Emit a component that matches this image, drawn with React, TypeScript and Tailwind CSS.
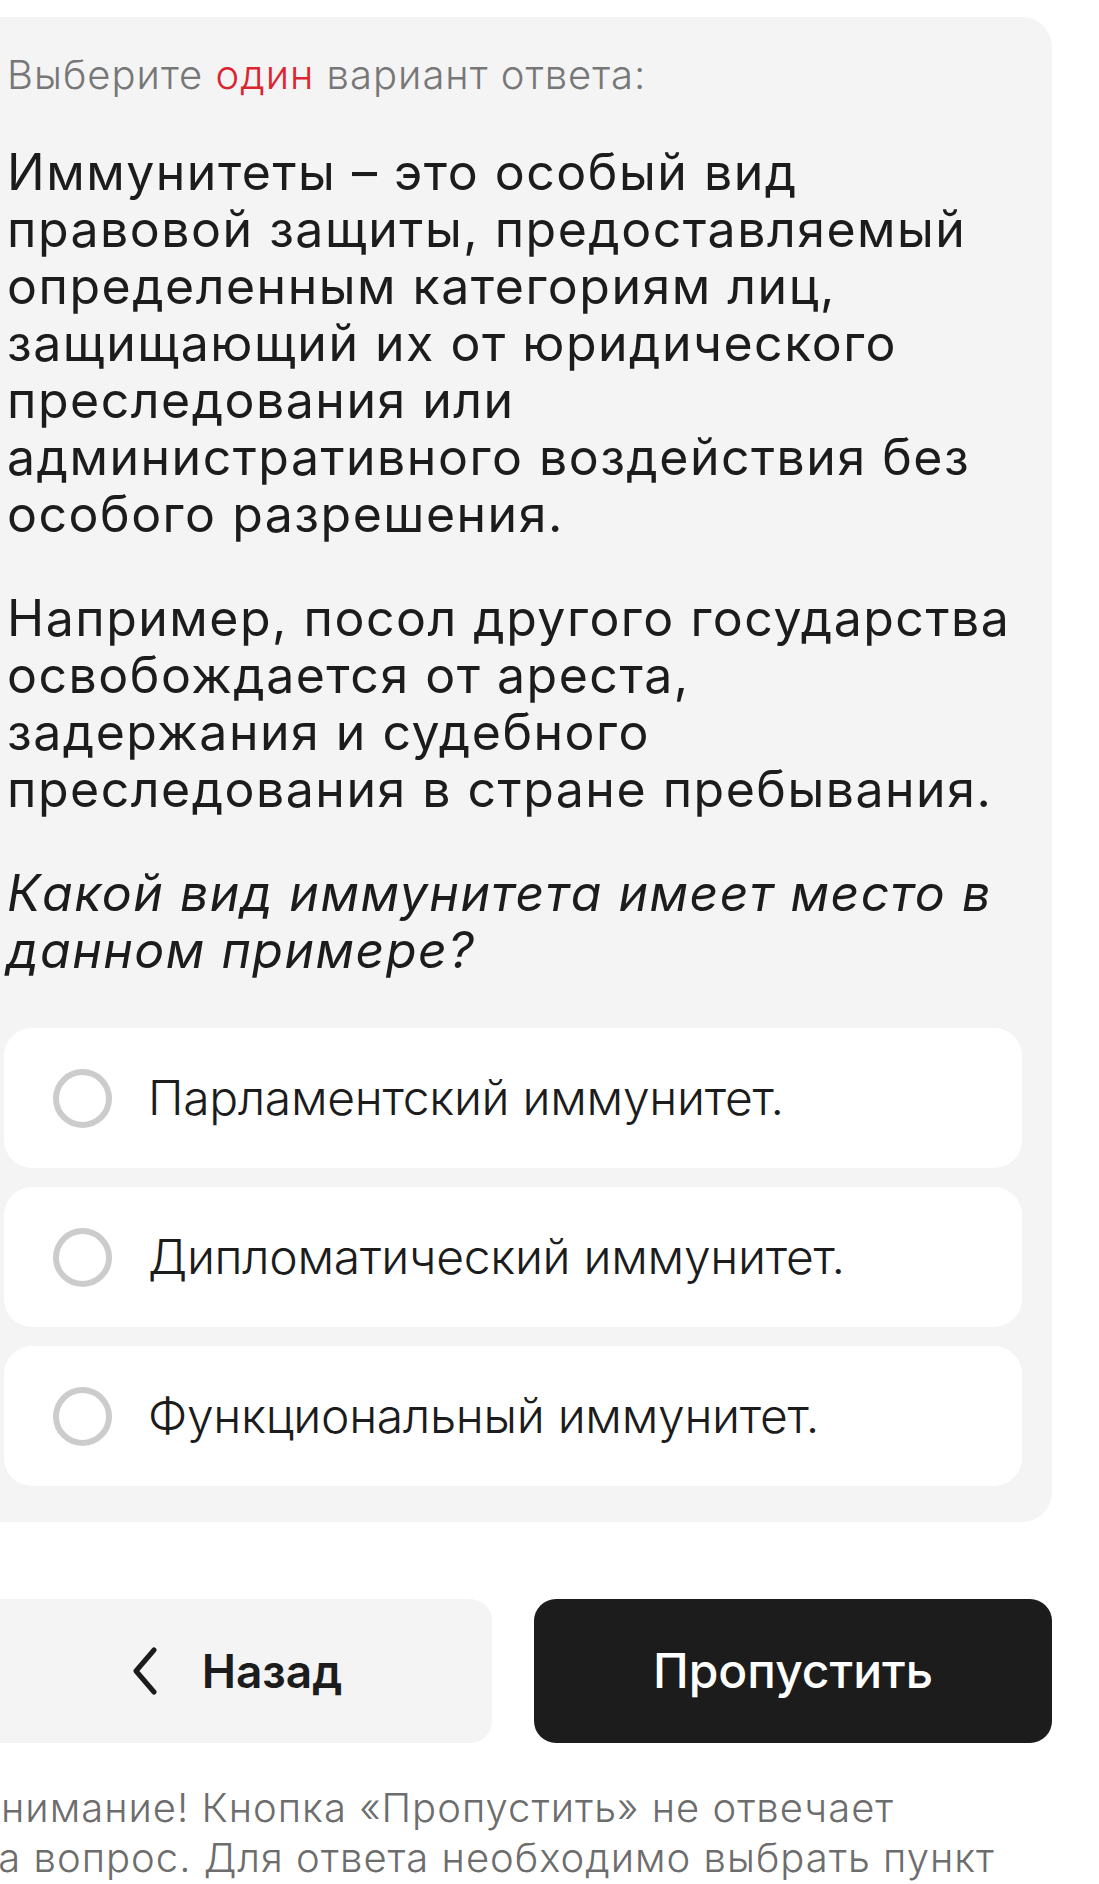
import { ReactNode } from 'react'

const font = { fontFamily: 'Inter, "Noto Sans", sans-serif' }

const intro = [
  'Иммунитеты – это особый вид',
  'правовой защиты, предоставляемый',
  'определенным категориям лиц,',
  'защищающий их от юридического',
  'преследования или',
  'административного воздействия без',
  'особого разрешения.',
]

const example = [
  'Например, посол другого государства',
  'освобождается от ареста,',
  'задержания и судебного',
  'преследования в стране пребывания.',
]

const question = ['Какой вид иммунитета имеет место в', 'данном примере?']

const options = ['Парламентский иммунитет.', 'Дипломатический иммунитет.', 'Функциональный иммунитет.']

function Lines({ lines }: { lines: string[] }) {
  return (
    <>
      {lines.map((line, i) => (
        <span key={i} className="block whitespace-nowrap">
          {line}
        </span>
      ))}
    </>
  )
}

function Option({ children }: { children: ReactNode }) {
  return (
    <label className="flex h-[140px] items-center rounded-[28px] bg-white pl-[49px]">
      <span className="size-[59px] shrink-0 rounded-full border-[6px] border-[#cccccc]" />
      <span className="ml-[36px] text-[48px] leading-[56px] font-light tracking-[-0.3px] text-[#1c1c1c]">
        {children}
      </span>
    </label>
  )
}

export default function App() {
  return (
    <div className="min-h-[1884px] overflow-hidden bg-white" style={font}>
      <div className="ml-[-26px] w-[1078px] pt-[17px]">
        <section className="rounded-[30px] bg-[#f4f4f4] px-[30px] pt-[34px] pb-[36px]">
          <p className="pl-[3px] text-[40px] leading-[48px] font-light tracking-[1px] text-[#777777]">
            Выберите <span className="text-[#dc2430]">один</span> вариант ответа:
          </p>

          <div className="pl-[3px] text-[50px] leading-[57px] tracking-[1.5px] text-[#1c1c1c]">
            <p className="mt-[45px]">
              <Lines lines={intro} />
            </p>
            <p className="mt-[47px]">
              <Lines lines={example} />
            </p>
            <p className="mt-[47px] italic">
              <Lines lines={question} />
            </p>
          </div>

          <div className="mt-[49px] flex flex-col gap-[19px]">
            {options.map((o) => (
              <Option key={o}>{o}</Option>
            ))}
          </div>
        </section>

        <div className="mt-[77px] grid grid-cols-2 gap-[42px]">
          <button className="flex h-[144px] items-center justify-center rounded-[22px] bg-[#f4f4f4] text-[#1c1c1c]">
            <svg width="26" height="48" viewBox="0 0 26 48" fill="none" className="ml-[8px]">
              <path d="M22 3 L4 24 L22 45" stroke="#1c1c1c" strokeWidth="5" strokeLinecap="round" strokeLinejoin="round" />
            </svg>
            <span className="ml-[44px] text-[46px] leading-[56px] font-semibold">Назад</span>
          </button>
          <button className="flex h-[144px] items-center justify-center rounded-[22px] bg-[#1c1c1c] text-[48px] leading-[58px] font-medium text-white">
            Пропустить
          </button>
        </div>

        <p className="mt-[40px] text-[40px] leading-[50px] font-light tracking-[1px] text-[#6d6d6d]">
          <span className="block whitespace-nowrap">Внимание! Кнопка «Пропустить» не отвечает</span>
          <span className="block whitespace-nowrap">на вопрос. Для ответа необходимо выбрать пункт</span>
        </p>
      </div>
    </div>
  )
}
